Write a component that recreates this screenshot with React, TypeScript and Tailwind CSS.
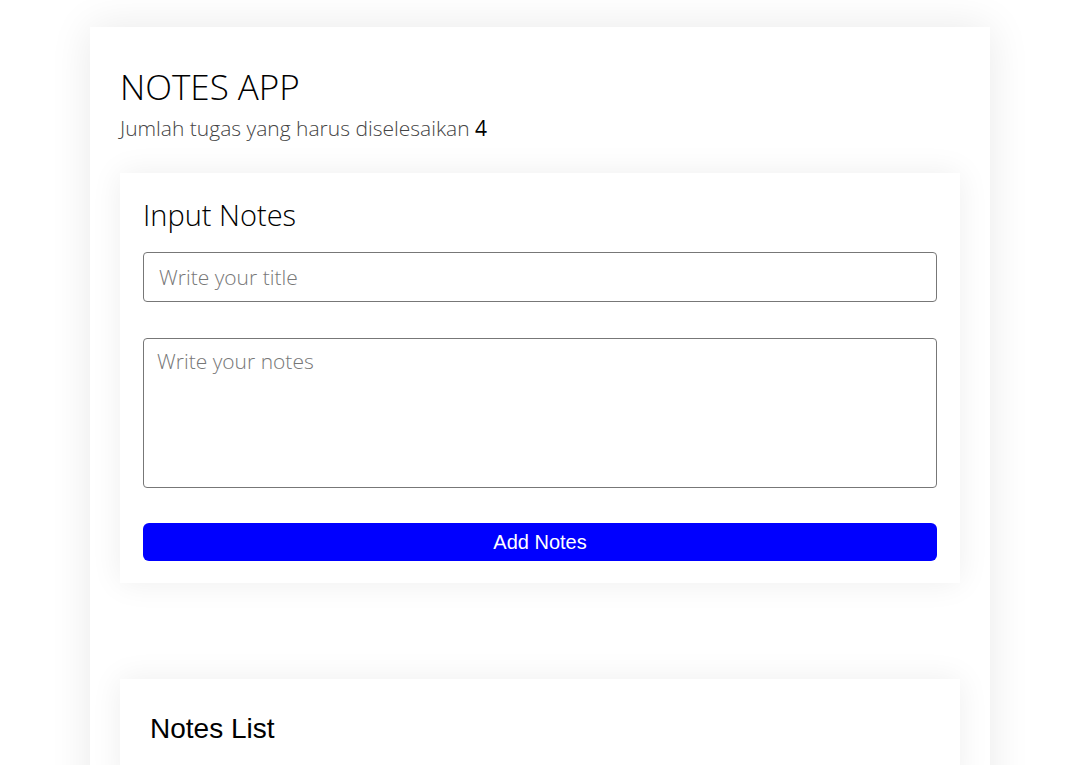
const font = { fontFamily: "'Open Sans', 'Noto Sans', sans-serif" };

const App = () => {
  return (
    <div className="min-h-screen bg-white pt-[27px]" style={font}>
      <div className="ml-[90px] w-[900px] bg-white px-[30px] pt-[36px] pb-[40px] shadow-[0_0_40px_rgba(0,0,0,0.09)]">
        <h1 className="text-[35px] leading-[48px] font-light text-black">NOTES APP</h1>
        <p className="mt-[2px] text-[21px] leading-[30px] font-light text-[#444]">
          Jumlah tugas yang harus diselesaikan <span className="font-normal text-black">4</span>
        </p>

        <div className="mt-[30px] bg-white px-[23px] pt-[24px] pb-[22px] shadow-[0_0_30px_rgba(0,0,0,0.07)]">
          <h2 className="text-[29px] leading-[36px] font-light text-black">Input Notes</h2>
          <input
            type="text"
            placeholder="Write your title"
            className="mt-[19px] block h-[50px] w-full rounded-[4px] border border-[#777] px-[15px] text-[21px] font-light text-black placeholder:text-[#777] outline-none"
            style={font}
          />
          <textarea
            placeholder="Write your notes"
            className="mt-[36px] block h-[150px] w-full resize-none rounded-[4px] border border-[#777] px-[13px] py-[7px] text-[21px] font-light text-black placeholder:text-[#777] outline-none"
            style={font}
          />
          <button
            className="mt-[35px] block h-[38px] w-full rounded-[6px] bg-[#0000ff] text-[20px] text-white"
            style={{ fontFamily: "'Liberation Sans', Arial, sans-serif" }}
          >
            Add Notes
          </button>
        </div>

        <div className="mt-[96px] bg-white px-[30px] pt-[32px] pb-[40px] shadow-[0_0_30px_rgba(0,0,0,0.07)]">
          <h2
            className="text-[28px] leading-[36px] text-black"
            style={{ fontFamily: "'Liberation Sans', Arial, sans-serif" }}
          >
            Notes List
          </h2>
        </div>
      </div>
    </div>
  );
};

export default App;
